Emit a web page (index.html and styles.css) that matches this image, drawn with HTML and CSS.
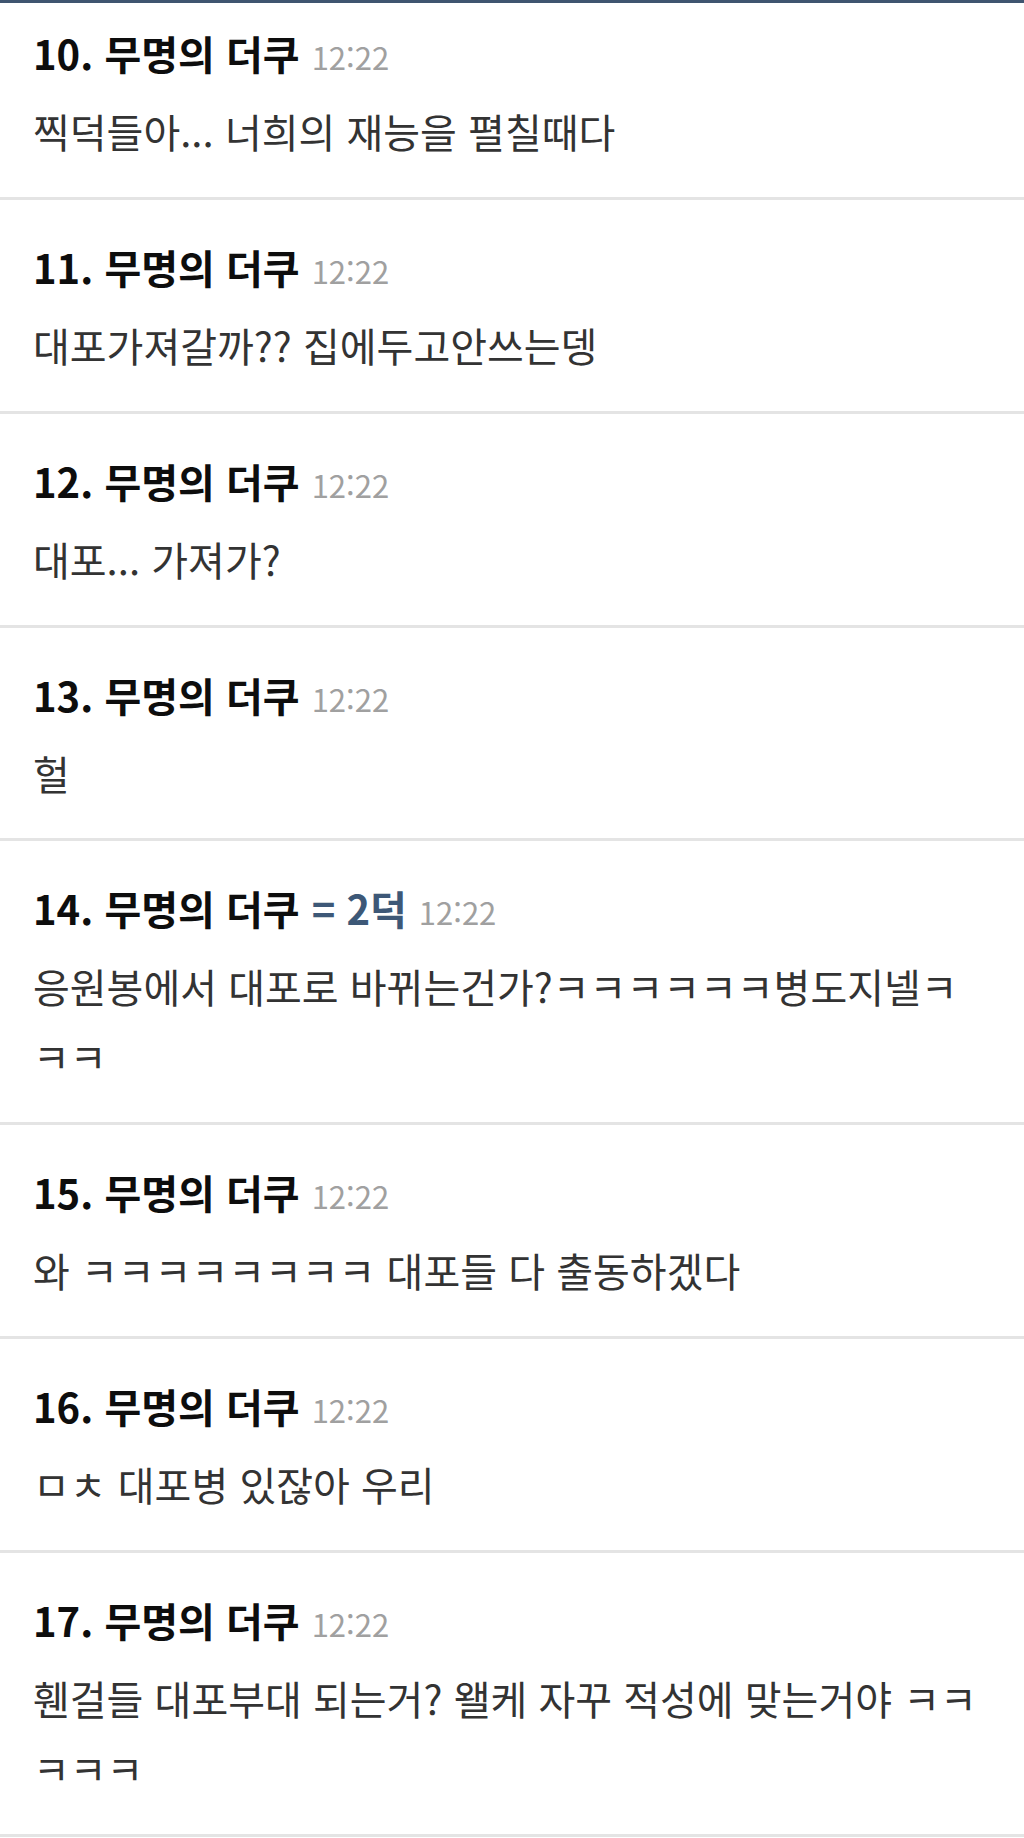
FILE: index.html
```html
<!DOCTYPE html>
<html lang="ko">
<head>
    <meta charset="UTF-8">
    <meta name="viewport" content="width=device-width, initial-scale=1.0">
    <title>댓글</title>
    <link rel="stylesheet" href="styles.css">
</head>
<body>
    <!-- Top bar -->
    <div class="top-bar"></div>

    <!-- Comment list -->
    <ul class="comment-list">
        <li class="comment">
            <div class="comment-head">
                <span class="comment-name">10. 무명의 더쿠</span>
                <span class="comment-time">12:22</span>
            </div>
            <p class="comment-body">찍덕들아... 너희의 재능을 펼칠때다</p>
        </li>
        <li class="comment">
            <div class="comment-head">
                <span class="comment-name">11. 무명의 더쿠</span>
                <span class="comment-time">12:22</span>
            </div>
            <p class="comment-body">대포가져갈까?? 집에두고안쓰는뎅</p>
        </li>
        <li class="comment">
            <div class="comment-head">
                <span class="comment-name">12. 무명의 더쿠</span>
                <span class="comment-time">12:22</span>
            </div>
            <p class="comment-body">대포... 가져가?</p>
        </li>
        <li class="comment">
            <div class="comment-head">
                <span class="comment-name">13. 무명의 더쿠</span>
                <span class="comment-time">12:22</span>
            </div>
            <p class="comment-body">헐</p>
        </li>
        <li class="comment">
            <div class="comment-head">
                <span class="comment-name">14. 무명의 더쿠</span>
                <span class="comment-ref">= 2덕</span>
                <span class="comment-time">12:22</span>
            </div>
            <p class="comment-body">응원봉에서 대포로 바뀌는건가?ㅋㅋㅋㅋㅋㅋ병도지넬ㅋㅋㅋ</p>
        </li>
        <li class="comment">
            <div class="comment-head">
                <span class="comment-name">15. 무명의 더쿠</span>
                <span class="comment-time">12:22</span>
            </div>
            <p class="comment-body">와 ㅋㅋㅋㅋㅋㅋㅋㅋ 대포들 다 출동하겠다</p>
        </li>
        <li class="comment">
            <div class="comment-head">
                <span class="comment-name">16. 무명의 더쿠</span>
                <span class="comment-time">12:22</span>
            </div>
            <p class="comment-body">ㅁㅊ 대포병 있잖아 우리</p>
        </li>
        <li class="comment">
            <div class="comment-head">
                <span class="comment-name">17. 무명의 더쿠</span>
                <span class="comment-time">12:22</span>
            </div>
            <p class="comment-body">휀걸들 대포부대 되는거? 왤케 자꾸 적성에 맞는거야 ㅋㅋㅋㅋㅋ</p>
        </li>
    </ul>
</body>
</html>
```

FILE: styles.css
```css
* {
    box-sizing: border-box;
}

body {
    margin: 0;
    background-color: #fff;
    font-family: "Noto Sans CJK KR", "Noto Sans", sans-serif;
    color: #333;
}

.top-bar {
    height: 3px;
    background-color: #3f5570;
}

.comment-list {
    list-style: none;
    margin: 0;
    padding: 0;
}

.comment {
    padding: 38px 30px 30.85px 33px;
    border-bottom: 3px solid #e4e4e4;
}

/* first row is scrolled partly out of view */
.comment:first-child {
    padding-top: 21px;
}

.comment-head {
    display: flex;
    align-items: baseline;
    gap: 12px;
    height: 58px;
    line-height: 58px;
}

.comment-name {
    font-size: 40px;
    font-weight: 700;
    color: #0d0d0d;
}

.comment-ref {
    font-size: 40px;
    font-weight: 700;
    color: #3d5877;
}

.comment-time {
    font-size: 31px;
    color: #a0a0a0;
}

.comment-body {
    margin: 14px 0 0;
    font-size: 40px;
    line-height: 70px;
    color: #333;
}
```
